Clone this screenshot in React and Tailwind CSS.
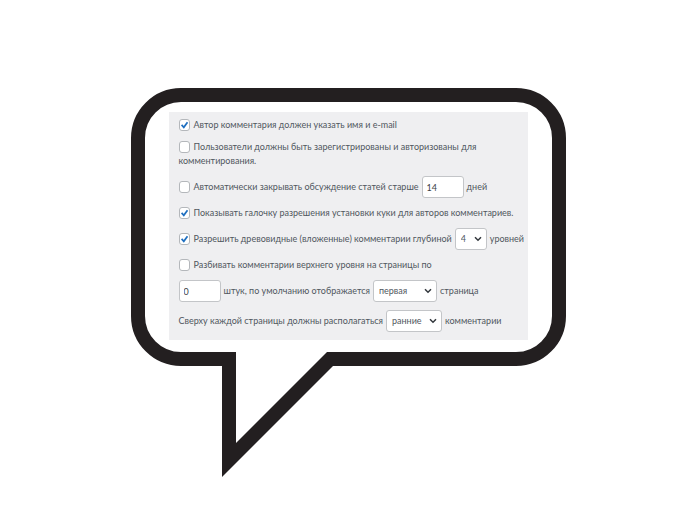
import React, { useState } from 'react';

const Checkbox = ({ id, checked, onChange }) => (
  <span className="relative inline-flex shrink-0 w-[11px] h-3 mr-px">
    <input
      type="checkbox"
      id={id}
      checked={checked}
      onChange={onChange}
      className="appearance-none w-full h-full bg-white border border-[#b4b7bb] rounded-[3px]"
    />
    {checked && (
      <svg viewBox="0 0 11 12" className="absolute inset-0 w-full h-full pointer-events-none">
        <path d="M2.6 5.9 L4.8 8.3 L8.5 3.2" fill="none" stroke="#1f6fc0" strokeWidth="1.7" />
      </svg>
    )}
  </span>
);

const Select = ({ id, label, value, onChange, options, width }) => (
  <span className={`relative inline-flex shrink-0 h-[22px] ${width}`}>
    <select
      id={id}
      aria-label={label}
      value={value}
      onChange={onChange}
      className="appearance-none w-full h-full bg-white border border-[#c3c5c8] rounded-[3px] pl-[5px] pr-4 text-[#50575e]"
    >
      {options.map((option) => (
        <option key={option} value={option}>{option}</option>
      ))}
    </select>
    <svg viewBox="0 0 8 6" className="absolute right-[5px] top-2 w-2 h-1.5 pointer-events-none">
      <path d="M1 1.2 L4 4.2 L7 1.2" fill="none" stroke="#32373c" strokeWidth="1.5" />
    </svg>
  </span>
);

const NumberBox = ({ id, label, value, onChange }) => (
  <input
    type="text"
    inputMode="numeric"
    id={id}
    aria-label={label}
    value={value}
    onChange={onChange}
    className="shrink-0 w-[42px] h-[22px] bg-white border border-[#c3c5c8] rounded-[3px] px-1 text-[#3c4146]"
  />
);

const App = () => {
  const [settings, setSettings] = useState({
    requireName: true,
    requireRegistration: false,
    autoClose: false,
    closeDays: '14',
    cookies: true,
    threaded: true,
    depth: '4',
    paginate: false,
    perPage: '0',
    defaultPage: 'первая',
    order: 'ранние'
  });

  const handleChange = (e) => {
    const { id, type, checked, value } = e.target;
    setSettings((prev) => ({
      ...prev,
      [id]: type === 'checkbox' ? checked : value
    }));
  };

  return (
    <main className="min-h-screen bg-white flex flex-col items-center pt-[88px] pl-4 pr-5 font-['Lato',sans-serif]">
      <div className="w-full max-w-[435px]">
        {/* Speech bubble */}
        <div className="border-[14px] border-[#231f20] rounded-[50px] px-6 pt-2.5 pb-3">
          <form className="bg-[#efeff1] text-[#50575e] text-[9px] leading-[14px] flex flex-col gap-2 px-2.5 pt-1.5 pb-2 whitespace-nowrap">
            {/* Name and email */}
            <div className="flex items-center gap-[3px]">
              <Checkbox id="requireName" checked={settings.requireName} onChange={handleChange} />
              <label htmlFor="requireName">Автор комментария должен указать имя и e-mail</label>
            </div>

            {/* Registration */}
            <label htmlFor="requireRegistration" className="block">
              <span className="flex items-center gap-[3px]">
                <Checkbox id="requireRegistration" checked={settings.requireRegistration} onChange={handleChange} />
                Пользователи должны быть зарегистрированы и авторизованы для
              </span>
              комментирования.
            </label>

            {/* Auto close */}
            <div className="flex items-center gap-[3px]">
              <Checkbox id="autoClose" checked={settings.autoClose} onChange={handleChange} />
              <label htmlFor="autoClose">Автоматически закрывать обсуждение статей старше</label>
              <NumberBox id="closeDays" label="Дней" value={settings.closeDays} onChange={handleChange} />
              <span>дней</span>
            </div>

            {/* Cookies */}
            <div className="flex items-center gap-[3px]">
              <Checkbox id="cookies" checked={settings.cookies} onChange={handleChange} />
              <label htmlFor="cookies">Показывать галочку разрешения установки куки для авторов комментариев.</label>
            </div>

            {/* Threaded comments */}
            <div className="flex items-center gap-[3px]">
              <Checkbox id="threaded" checked={settings.threaded} onChange={handleChange} />
              <label htmlFor="threaded">Разрешить древовидные (вложенные) комментарии глубиной</label>
              <Select
                id="depth"
                label="Уровней"
                value={settings.depth}
                onChange={handleChange}
                options={['2', '3', '4', '5', '6', '7', '8', '9', '10']}
                width="w-8"
              />
              <span>уровней</span>
            </div>

            {/* Pagination */}
            <div className="flex items-center gap-[3px]">
              <Checkbox id="paginate" checked={settings.paginate} onChange={handleChange} />
              <label htmlFor="paginate">Разбивать комментарии верхнего уровня на страницы по</label>
            </div>
            <div className="flex items-center gap-[3px]">
              <NumberBox id="perPage" label="Штук" value={settings.perPage} onChange={handleChange} />
              <label htmlFor="defaultPage">штук, по умолчанию отображается</label>
              <Select
                id="defaultPage"
                label="Страница"
                value={settings.defaultPage}
                onChange={handleChange}
                options={['первая', 'последняя']}
                width="w-16"
              />
              <span>страница</span>
            </div>

            {/* Order */}
            <div className="flex items-center gap-[3px]">
              <label htmlFor="order">Сверху каждой страницы должны располагаться</label>
              <Select
                id="order"
                label="Комментарии"
                value={settings.order}
                onChange={handleChange}
                options={['ранние', 'поздние']}
                width="w-14"
              />
              <span>комментарии</span>
            </div>
          </form>
        </div>

        {/* Bubble tail */}
        <svg viewBox="0 0 112 126" className="relative block w-28 h-[126px] -mt-[14px] ml-[91px]">
          <path d="M14 0 H105 L111 14 L0 125 V0 Z" fill="#231f20" />
          <path d="M14 0 H105 L14 91 Z" fill="#ffffff" />
        </svg>
      </div>
    </main>
  );
};

export default App;
